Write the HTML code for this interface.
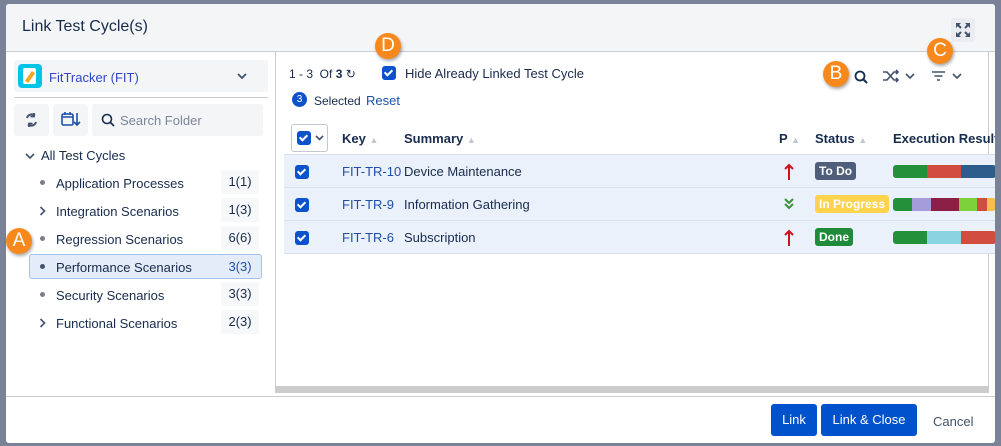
<!DOCTYPE html>
<html><head><style>
*{box-sizing:border-box;margin:0;padding:0}
body{width:1001px;height:446px;background:#7a8297;font-family:"Liberation Sans",sans-serif;position:relative;overflow:hidden;color:#172b4d;font-size:13px}
.a{position:absolute}
.modal{left:6px;top:4px;width:989px;height:439px;background:#fff;border-radius:3px;overflow:hidden}
.hdr{left:0;top:0;width:989px;height:48px;background:#f4f5f7;border-bottom:1px solid #c9ccd1}
.badge{width:26px;height:26px;border-radius:50%;background:#f7891c;color:#fff;font-size:19px;text-align:center;line-height:26px;box-shadow:1px 2px 3px rgba(0,0,0,.35)}
.tree{font-size:13px;color:#172b4d}
.cnt{background:#f7f8f9;width:38px;height:24px;text-align:center;line-height:24px;border-radius:3px}
.dot{width:5px;height:5px;border-radius:50%;background:#7a7f8a}
.cb{width:14px;height:14px;background:#0b52cc;border-radius:3px}
.cb:after{content:"";position:absolute;left:4px;top:2px;width:3px;height:6px;border:solid #fff;border-width:0 2px 2px 0;transform:rotate(45deg)}
.row{left:278px;width:712px;height:33px;background:#ebf1fa;border-bottom:1px solid #dcdfe4}
.key{color:#1d4fa8}
.th{font-weight:bold;top:131px}
.sort{color:#c1c7d0;font-size:9px}
.bar{height:13px;top:10px;display:flex;border-radius:3px;overflow:hidden;width:103px;left:609px}
.btn{background:#0052cc;color:#fff;border-radius:3px;height:32px;line-height:32px;text-align:center;font-size:13px}
</style></head><body>
<div class="a modal">
 <div class="a hdr"><div class="a" style="left:16px;top:14px;font-size:16px">Link Test Cycle(s)</div>
  <div class="a" style="left:945px;top:14px;width:24px;height:24px;background:#ebecf0;border-radius:3px">
   <svg width="24" height="24" viewBox="0 0 24 24"><g stroke="#42526e" stroke-width="2" fill="none"><path d="M6 6l4 4M18 6l-4 4M6 18l4-4M18 18l-4-4"/></g><g fill="#42526e"><path d="M5 5h5l-5 5zM19 5h-5l5 5zM5 19h5l-5-5zM19 19h-5l5-5z"/></g></svg></div>
 </div>
 <!-- left -->
 <div class="a" style="left:8px;top:56px;width:254px;height:32px;background:#f4f5f7;border-radius:3px"></div>
 <div class="a" style="left:12px;top:60px;width:24px;height:24px;background:#00c5e6;border-radius:4px"><div class="a" style="left:5px;top:4px;width:13px;height:16px;background:#fff;border-radius:2px"></div><div class="a" style="left:10px;top:7px;width:4px;height:12px;background:#f5a623;transform:rotate(35deg)"></div></div>
 <div class="a" style="left:43px;top:66px;color:#2f47c4;font-size:13px">FitTracker (FIT)</div>
 <svg class="a" style="left:231px;top:68px" width="10" height="8"><path d="M1 2l4 4 4-4" stroke="#42526e" stroke-width="1.8" fill="none"/></svg>
 <div class="a" style="left:8px;top:93px;width:254px;height:1px;background:#ccc"></div>
 <div class="a" style="left:8px;top:100px;width:35px;height:32px;background:#f4f5f7;border-radius:3px">
  <svg width="35" height="32"><path d="M13 14a5 5 0 0 1 8-2.5M22 18a5 5 0 0 1-8 2.5" stroke="#42526e" stroke-width="2" fill="none"/><path d="M20 9v3.5h-3.5M15 23v-3.5h3.5" stroke="#42526e" stroke-width="1.8" fill="none"/></svg></div>
 <div class="a" style="left:47px;top:100px;width:35px;height:32px;background:#f4f5f7;border-radius:3px">
  <svg width="35" height="32"><rect x="9" y="10" width="11" height="11" rx="1.5" stroke="#1d4fa8" stroke-width="1.6" fill="none"/><path d="M9 13h11M12 8v3M17 8v3M24 9v12M21 18l3 3 3-3" stroke="#1d4fa8" stroke-width="1.6" fill="none"/></svg></div>
 <div class="a" style="left:86px;top:100px;width:171px;height:32px;background:#f4f5f7;border-radius:3px">
  <svg class="a" style="left:9px;top:9px" width="14" height="14"><circle cx="6" cy="6" r="4.5" stroke="#172b4d" stroke-width="1.6" fill="none"/><path d="M9.5 9.5l3.5 3.5" stroke="#172b4d" stroke-width="1.7"/></svg>
  <div class="a" style="left:28px;top:9px;color:#7a869a;font-size:13px">Search Folder</div></div>
 <div class="tree">
  <svg class="a" style="left:19px;top:148px" width="10" height="8"><path d="M1 2l4 4 4-4" stroke="#42526e" stroke-width="1.6" fill="none"/></svg>
  <div class="a" style="left:35px;top:144px">All Test Cycles</div>
  <div class="a" style="left:23px;top:250px;width:233px;height:25px;background:#e4ecf9;border:1px solid #a8c1ea;border-radius:3px"></div>
  <div class="a dot" style="left:34px;top:176px"></div><div class="a" style="left:50px;top:172px">Application Processes</div><div class="a cnt" style="left:215px;top:166px">1(1)</div>
  <svg class="a" style="left:33px;top:202px" width="7" height="10"><path d="M1.5 1l4 4-4 4" stroke="#42526e" stroke-width="1.6" fill="none"/></svg><div class="a" style="left:50px;top:200px">Integration Scenarios</div><div class="a cnt" style="left:215px;top:194px">1(3)</div>
  <div class="a dot" style="left:34px;top:232px"></div><div class="a" style="left:50px;top:228px">Regression Scenarios</div><div class="a cnt" style="left:215px;top:222px">6(6)</div>
  <div class="a dot" style="left:34px;top:260px;background:#42526e"></div><div class="a" style="left:50px;top:256px">Performance Scenarios</div><div class="a" style="left:215px;top:250px;width:38px;height:25px;line-height:25px;text-align:center;color:#1d4fa8">3(3)</div>
  <div class="a dot" style="left:34px;top:288px"></div><div class="a" style="left:50px;top:284px">Security Scenarios</div><div class="a cnt" style="left:215px;top:278px">3(3)</div>
  <svg class="a" style="left:33px;top:314px" width="7" height="10"><path d="M1.5 1l4 4-4 4" stroke="#42526e" stroke-width="1.6" fill="none"/></svg><div class="a" style="left:50px;top:312px">Functional Scenarios</div><div class="a cnt" style="left:215px;top:306px">2(3)</div>
 </div>
 <div class="a" style="left:269px;top:48px;width:1px;height:341px;background:#ccc"></div>
 <div class="a" style="left:982px;top:48px;width:1px;height:341px;background:#ccc"></div>
 <!-- right -->
 <div class="a" style="left:283px;top:63px;font-size:12px">1 - 3 &nbsp;Of <b>3</b> ↻</div>
 <div class="a cb" style="left:376px;top:62px"></div>
 <div class="a" style="left:399px;top:62px">Hide Already Linked Test Cycle</div>
 <div class="a" style="left:286px;top:88px;width:15px;height:15px;border-radius:50%;background:#0b52cc;color:#fff;font-size:10px;text-align:center;line-height:15px">3</div>
 <div class="a" style="left:308px;top:90px;font-size:12px">Selected</div>
 <div class="a" style="left:360px;top:89px;color:#1d4fa8;font-size:13px">Reset</div>
 <svg class="a" style="left:848px;top:66px" width="14" height="14"><circle cx="6" cy="6" r="4.5" stroke="#172b4d" stroke-width="1.8" fill="none"/><path d="M9.5 9.5l3.5 3.5" stroke="#172b4d" stroke-width="2"/></svg>
 <svg class="a" style="left:876px;top:64px" width="38" height="16"><path d="M1 4h4l7 8h4M1 12h4l7-8h4M14 2l2 2-2 2M14 10l2 2-2 2" stroke="#42526e" stroke-width="1.6" fill="none"/><path d="M24 6l4 4 4-4" stroke="#42526e" stroke-width="1.6" fill="none"/></svg>
 <svg class="a" style="left:925px;top:64px" width="36" height="16"><path d="M1 4h13M3.5 8h8M6 12h3" stroke="#42526e" stroke-width="1.6"/><path d="M22 6l4 4 4-4" stroke="#42526e" stroke-width="1.6" fill="none"/></svg>
 <!-- table -->
 <div class="a" style="left:278px;top:118px;width:712px;height:33px;border-bottom:1px solid #dcdfe4"></div>
 <div class="a" style="left:285px;top:120px;width:37px;height:28px;border:1px solid #c1c7d0;border-radius:3px;background:#fff"></div>
 <div class="a cb" style="left:291px;top:127px"></div>
 <svg class="a" style="left:309px;top:131px" width="9" height="7"><path d="M1 1l3.5 3.5L8 1" stroke="#42526e" stroke-width="1.6" fill="none"/></svg>
 <div class="a th" style="left:336px;top:127px">Key <span class="sort">▲</span></div>
 <div class="a th" style="left:398px;top:127px">Summary <span class="sort">▲</span></div>
 <div class="a th" style="left:773px;top:127px">P <span class="sort">▲</span></div>
 <div class="a th" style="left:809px;top:127px">Status <span class="sort">▲</span></div>
 <div class="a th" style="left:887px;top:127px;white-space:nowrap">Execution Result</div>

 <div class="a row" style="top:151px"><div class="a cb" style="left:11px;top:10px"></div><div class="a key" style="left:58px;top:9px">FIT-TR-10</div><div class="a" style="left:120px;top:9px">Device Maintenance</div>
  <svg class="a" style="left:500px;top:8px" width="10" height="18"><path d="M5 17V3M1 6l4-4 4 4" stroke="#d0101a" stroke-width="2" fill="none" stroke-dasharray="14 0"/></svg>
  <div class="a" style="left:531px;top:7px;background:#505f79;color:#fff;font-weight:bold;font-size:12px;padding:2px 4px;border-radius:3px">To Do</div>
  <div class="a bar"><i style="width:34px;background:#22913a"></i><i style="width:34px;background:#d14d40"></i><i style="width:35px;background:#2d5d8b"></i></div></div>
 <div class="a row" style="top:184px"><div class="a cb" style="left:11px;top:10px"></div><div class="a key" style="left:58px;top:9px">FIT-TR-9</div><div class="a" style="left:120px;top:9px">Information Gathering</div>
  <svg class="a" style="left:500px;top:10px" width="10" height="12"><path d="M1 1l4 4 4-4M1 6l4 4 4-4" stroke="#3a8f3a" stroke-width="2" fill="none"/></svg>
  <div class="a" style="left:531px;top:7px;background:#fcd34d;color:#fff;font-weight:bold;font-size:12px;padding:2px 4px;border-radius:3px">In Progress</div>
  <div class="a bar"><i style="width:19px;background:#22913a"></i><i style="width:19px;background:#a59cdc"></i><i style="width:28px;background:#8c1f45"></i><i style="width:18px;background:#7dd13b"></i><i style="width:10px;background:#d14d40"></i><i style="width:9px;background:#f5c04c"></i></div></div>
 <div class="a row" style="top:217px"><div class="a cb" style="left:11px;top:10px"></div><div class="a key" style="left:58px;top:9px">FIT-TR-6</div><div class="a" style="left:120px;top:9px">Subscription</div>
  <svg class="a" style="left:500px;top:8px" width="10" height="18"><path d="M5 17V3M1 6l4-4 4 4" stroke="#d0101a" stroke-width="2" fill="none"/></svg>
  <div class="a" style="left:531px;top:7px;background:#1e8a3a;color:#fff;font-weight:bold;font-size:12px;padding:2px 4px;border-radius:3px">Done</div>
  <div class="a bar"><i style="width:34px;background:#22913a"></i><i style="width:34px;background:#8ad3e0"></i><i style="width:35px;background:#d14d40"></i></div></div>
 <div class="a" style="left:270px;top:382px;width:712px;height:7px;background:#ccc"></div>
 <div class="a" style="left:0;top:392px;width:989px;height:1px;background:#ccc"></div>
 <div class="a btn" style="left:765px;top:400px;width:46px">Link</div>
 <div class="a btn" style="left:815px;top:400px;width:96px">Link &amp; Close</div>
 <div class="a" style="left:927px;top:410px;color:#42526e">Cancel</div>
</div>
<div class="a badge" style="left:6px;top:228px">A</div>
<div class="a badge" style="left:823px;top:61px">B</div>
<div class="a badge" style="left:927px;top:38px">C</div>
<div class="a badge" style="left:375px;top:33px">D</div>
</body></html>
